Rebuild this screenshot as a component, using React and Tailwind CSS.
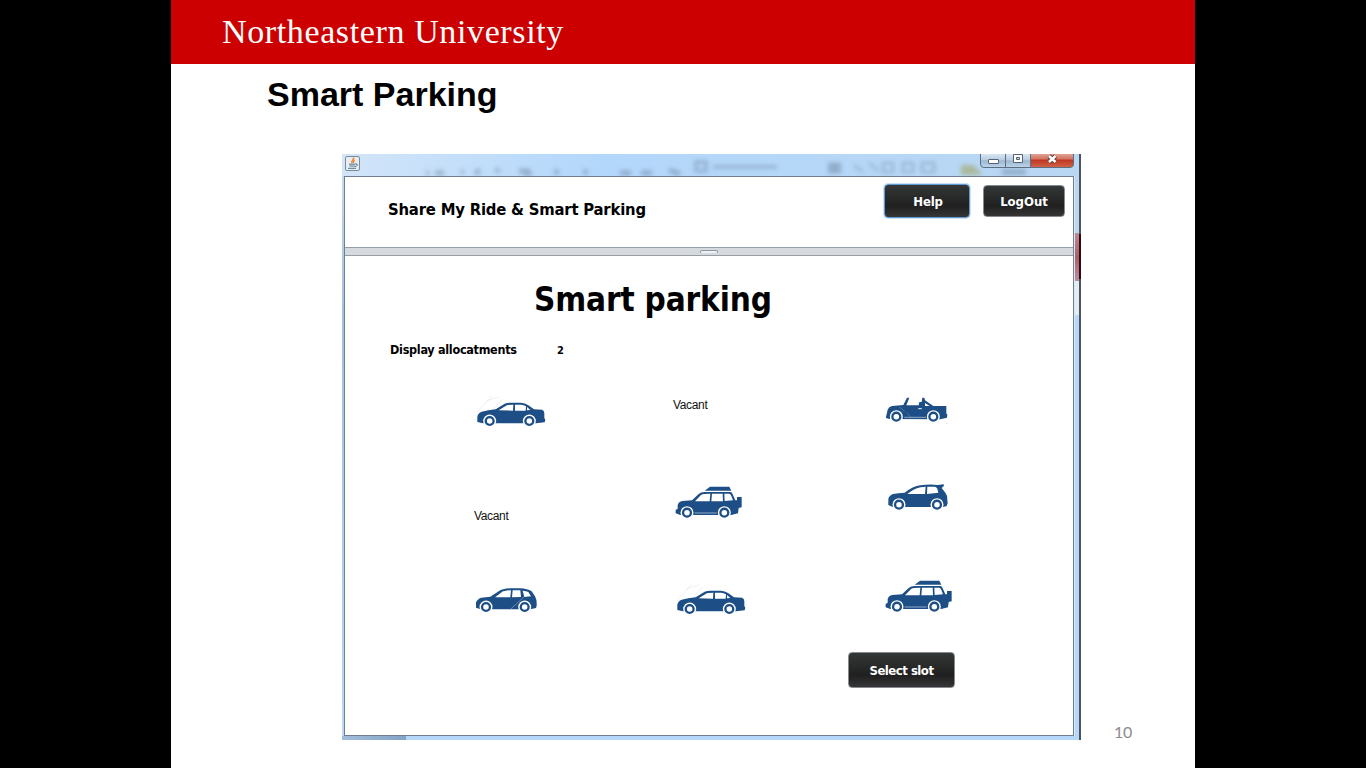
import React from "react";

const BLUE = "#1d4f86";
const UI = "font-['DejaVu_Sans_Condensed','DejaVu_Sans',sans-serif] [font-stretch:condensed] font-bold";

function Wheel({ cx, cy }) {
  return (
    <g>
      <circle cx={cx} cy={cy} r="19.5" fill="#fff" />
      <circle cx={cx} cy={cy} r="11.8" fill="#fff" stroke={BLUE} strokeWidth="7" />
    </g>
  );
}

function Car({ children, wheels, className = "" }) {
  return (
    <svg viewBox="0 0 300 165" width="100" height="55" className={`block shrink-0 ${className}`}>
      {children}
      {wheels.map(([x, y]) => (
        <Wheel key={x} cx={x} cy={y} />
      ))}
    </svg>
  );
}

function Sedan({ className }) {
  return (
    <Car className={className} wheels={[[89, 108], [208, 108]]}>
      <path d="M52 82 L96 32 M66 112 L128 42 M78 48 L118 36" stroke="#eef1f5" strokeWidth="3" fill="none" />
      <path d="M52 111 L52 95 Q54 84 65 80 Q84 75 107 73 L134 56 Q141 53 151 53 L183 53 Q195 54 204 60 L222 73 L246 74 Q253 76 253 85 L253 99 L256 104 L254 112 L228 115 L69 115 Z" fill={BLUE} />
      <path d="M116 76 L138 62 Q143 59 160 59 L159 77 Z M165 59 L183 59 Q191 60 198 64 L197 77 L165 77 Z M201 66 L211 75 L201 76 Z" fill="#fff" />
    </Car>
  );
}

function Jeep() {
  return (
    <Car wheels={[[79, 95], [190, 95]]}>
      <path d="M48 96 L53 74 Q56 65 66 63 L100 60 L111 38 L118 38 L109 61 L146 61 L148 51 L155 51 L157 38 L163 38 L165 46 L190 63 L229 63 L229 86 L232 88 L231 98 L211 103 L59 102 L48 99 Z" fill={BLUE} />
      <path d="M165 54 L179 63 L165 63 Z" fill="#fff" />
      <path d="M145 71 H155" stroke="#fff" strokeWidth="3" />
      <path d="M103 97 H168" stroke="#cfdae7" strokeWidth="2" />
      <path d="M88 66 L104 79 M110 84 L127 101" stroke="#7e9cbc" strokeWidth="1.5" />
      <path d="M226 115 h7" stroke="#d5dae0" strokeWidth="2" />
    </Car>
  );
}

function Suv({ className }) {
  return (
    <Car className={className} wheels={[[81, 113], [193, 113]]}>
      <path d="M47 115 L47 105 L53 101 L53 90 Q56 80 67 78 L96 76 L116 57 Q122 51 134 51 L211 51 Q216 51 218 58 L226 76 L231 76 L231 66 L245 66 L245 97 L236 99 L234 115 L214 120 L61 120 Z" fill={BLUE} />
      <path d="M134 47 L150 35 L208 35 L214 47 Z" fill={BLUE} />
      <path d="M105 79 L123 60 Q126 56 151 56 L149 79 Z M156 56 L188 56 L189 79 L154 79 Z M193 56 L208 56 Q212 57 214 63 L219 76 L194 78 Z" fill="#fff" />
      <path d="M104 114 H170" stroke="#cfdae7" strokeWidth="2" />
    </Car>
  );
}

function Hatchback() {
  return (
    <Car wheels={[[87, 89], [201, 89]]}>
      <path d="M55 90 L55 73 Q56 62 69 57 Q85 54 104 53 Q129 34 151 31 Q179 27 203 30 L221 28 L222 32 L215 39 L226 53 Q233 61 232 75 L233 84 L230 93 L220 96 L68 96 Z" fill={BLUE} />
      <path d="M112 57 Q135 39 152 37 L167 35 L165 57 Z M172 35 L195 35 Q200 36 202 41 L205 53 L171 57 Z" fill="#fff" />
    </Car>
  );
}

function Wagon() {
  return (
    <Car wheels={[[78, 96], [194, 96]]}>
      <path d="M48 98 L48 83 Q51 72 64 68 L91 65 L116 49 Q126 41 151 40 L181 40 Q202 41 215 49 L225 64 Q231 74 230 92 L228 99 L211 103 L62 103 Z" fill={BLUE} />
      <path d="M105 67 L123 53 Q131 46 153 46 L151 67 Z M158 46 L181 46 L183 66 L156 67 Z M188 47 Q199 48 205 51 L213 64 L193 66 Z" fill="#fff" />
      <path d="M150 104 L193 65" stroke="#8fa9c5" strokeWidth="2" />
    </Car>
  );
}

function Vacant({ className }) {
  return (
    <span className={`block shrink-0 h-4 leading-4 whitespace-nowrap font-['Liberation_Sans',sans-serif] text-[12px] tracking-[-0.35px] text-[#111] ${className}`}>
      Vacant
    </span>
  );
}

function DarkButton({ children, className }) {
  return (
    <button className={`${UI} flex shrink-0 items-center justify-center rounded-[4px] border bg-linear-to-b from-[#353838] via-[#202020] via-65% to-[#363636] text-[13px] leading-none text-white whitespace-nowrap ${className}`}>
      {children}
    </button>
  );
}

function JavaIcon() {
  return (
    <svg width="15" height="15" viewBox="0 0 15 15" className="block">
      <rect x="0.5" y="0.5" width="14" height="14" rx="1.5" fill="#e9edf1" stroke="#7c8996" />
      <path d="M8.8 1.5 C9 4 5.6 4.2 7.2 7.2 M9.6 4 C8 5 8.2 5.6 8.6 7" stroke="#ee7d22" strokeWidth="1.3" fill="none" />
      <path d="M4 8.2 H10 M4.5 10 H9.7 M3 12.3 H11 M10 8 Q13 7.5 12.3 9.2 Q11.5 10.7 9.6 10.8" stroke="#4d7790" strokeWidth="1" fill="none" />
    </svg>
  );
}

function TitleBar() {
  return (
    <div className="relative flex h-[22px] shrink-0 items-start justify-between overflow-hidden bg-linear-to-r from-[#d2e5f9] via-[#b3d7fb] via-35% to-[#b9d7f3] pl-[3px] pr-[5px]">
      <svg width="739" height="22" className="absolute inset-0 blur-[2px]">
        <g stroke="#7892ad" fill="none" opacity="0.6">
          <path d="M84 19h3 M93 19h9 M119 18h3 M133 20l5-4 M154 18l3-3 M177 17h11 M182 20h8 M212 18h5 M241 18h5 M278 19h11 M299 19h11 M327 16l11 4" strokeWidth="5" />
          <path d="M354 8h10v9h-10z M371 13h64" strokeWidth="3" />
          <path d="M486 14h13" strokeWidth="11" />
          <path d="M512 11l9 7 M527 9l9 8 M541 9h10v9h-10z M561 9h10v9h-10z M580 9h12v9h-12z" strokeWidth="2" />
          <path d="M660 18h24" strokeWidth="6" />
        </g>
        <path d="M619 11h12l10 10h-22z" fill="#a5ad78" opacity=".7" />
      </svg>
      <div className="relative pt-[2px]"><JavaIcon /></div>
      <svg width="94" height="15" viewBox="0 0 94 15" className="relative block">
        <defs>
          <linearGradient id="glass" x1="0" y1="0" x2="0" y2="1">
            <stop offset="0" stopColor="#d9e7f4" /><stop offset=".45" stopColor="#b5cce1" /><stop offset=".5" stopColor="#9bb6cf" /><stop offset="1" stopColor="#bdd6ec" />
          </linearGradient>
          <linearGradient id="close" x1="0" y1="0" x2="0" y2="1">
            <stop offset="0" stopColor="#e0a296" /><stop offset=".38" stopColor="#d3725f" /><stop offset=".44" stopColor="#bd3520" /><stop offset="1" stopColor="#d4654a" />
          </linearGradient>
        </defs>
        <path d="M.5 0V10Q.5 13.5 4 13.5H50.5V0Z" fill="url(#glass)" />
        <path d="M50.5 0V13.5H90Q93.5 13.5 93.5 10V0Z" fill="url(#close)" />
        <path d="M.5 0V10Q.5 13.5 4 13.5H90Q93.5 13.5 93.5 10V0M25.5 0V13M50.5 0V13" fill="none" stroke="#5c6f82" />
        <rect x="8.5" y="5.5" width="10" height="4" rx=".5" fill="#fff" stroke="#576373" />
        <path d="M33.5 .5H42.5V8.5H33.5ZM36.5 3.5V5.5H39.5V3.5Z" fill="#fff" fillRule="evenodd" stroke="#576373" />
        <path d="M69 2L75.5 8M75.5 2L69 8" stroke="#6a3c3b" strokeWidth="4.5" />
        <path d="M69 2L75.5 8M75.5 2L69 8" stroke="#fff" strokeWidth="2.5" />
      </svg>
    </div>
  );
}

function AppWindow() {
  return (
    <div className="flex h-[586px] w-[739px] shrink-0 bg-[#4a545e]">
      <div className="flex w-[737px] shrink-0 flex-col bg-[#b6d7f9]">
        <TitleBar />
        <div className="flex h-[560px] shrink-0">
          <div className="w-[2px] shrink-0 bg-linear-to-b from-[#c4daef] via-[#9fc0df] via-25% to-[#b9d8f7]" />
          <main className="flex h-[560px] w-[730px] shrink-0 flex-col border border-[#6f7f90] bg-white">
            <header className="flex h-[70px] shrink-0 items-start pl-[43px] pt-[7px]">
              <h2 className={`${UI} mt-[16px] h-5 w-[496px] text-[16.5px] leading-5 tracking-[-0.2px] whitespace-nowrap text-black`}>
                Share My Ride &amp; Smart Parking
              </h2>
              <DarkButton className="h-[34px] w-[86px] border-[#5f9cd6] pl-0.5 tracking-[-0.2px] ring-1 ring-[#a9cdf0]/60">Help</DarkButton>
              <DarkButton className="ml-[13px] mt-px h-8 w-[82px] border-[#858b90]">LogOut</DarkButton>
            </header>
            <div className="flex h-[9px] shrink-0 justify-center border-y border-[#969ea6] bg-[#d6dadf]">
              <div className="mt-[2px] h-[3px] w-[18px] rounded-t-[2px] border-x border-t border-[#8d97a3] bg-[#edf0f4]" />
            </div>
            <section className="flex flex-1 flex-col">
              <h1 className={`${UI} ml-[189px] mt-[24px] h-10 text-[33px] leading-10 tracking-[-0.15px] whitespace-nowrap text-black`}>Smart parking</h1>
              <div className={`${UI} ml-[45px] mt-[22px] flex h-4 text-[12.5px] leading-4 whitespace-nowrap text-black`}>
                <span className="w-[167px] tracking-[-0.28px]">Display allocatments</span>
                <span className="text-[11px] leading-[17px]">2</span>
              </div>
              <div className="ml-[115px] mt-[27px] flex h-[245px] shrink-0">
                <div className="flex w-[200px] flex-col">
                  <Sedan />
                  <Vacant className="ml-[14px] mt-[68px]" />
                  <div className="mt-[51px]"><Wagon /></div>
                </div>
                <div className="flex w-[210px] flex-col">
                  <Vacant className="ml-[13px] mt-[12px]" />
                  <Suv className="mt-[62px]" />
                  <Sedan className="mt-[43px]" />
                </div>
                <div className="flex w-[100px] flex-col">
                  <Jeep />
                  <div className="mt-[35px]"><Hatchback /></div>
                  <Suv className="mt-[39px]" />
                </div>
              </div>
              <DarkButton className="ml-[503px] mt-[22px] h-[36px] w-[107px] border-[#858b90] tracking-[-0.5px]">Select slot</DarkButton>
            </section>
          </main>
          <div className="flex w-[5px] shrink-0 flex-col border-l border-[#d7e8f7]">
            <div className="h-[57px] bg-[#bcd7f1]" />
            <div className="h-[48px] bg-linear-to-b from-[#bd8a96] via-[#aa5e68] to-[#b98e9c]" />
            <div className="h-[34px] bg-[#e4edf5]" />
            <div className="flex-1 bg-[#b6d7f9]" />
          </div>
        </div>
        <div className="flex h-1">
          <div className="w-[64px] bg-linear-to-r from-[#a3bdd9] to-[#83a4c5]" />
          <div className="flex-1 bg-[#b6d7f9]" />
        </div>
      </div>
      <div className="flex w-[2px] flex-col pt-[80px]">
        <div className="h-[45px] bg-[#30080f]" />
      </div>
    </div>
  );
}

export default function App() {
  return (
    <div className="flex h-[768px] w-[1366px] justify-center overflow-hidden bg-black">
      <div className="flex w-[1024px] flex-col bg-white">
        <div className="flex h-16 shrink-0 items-center bg-[#cc0000] pl-[51px]">
          <span className="font-['Liberation_Serif',serif] text-[34px] leading-[40px] tracking-[0.62px] whitespace-nowrap text-white">Northeastern University</span>
        </div>
        <h1 className="ml-[96px] mt-[10px] h-10 shrink-0 font-['Liberation_Sans',sans-serif] text-[34px] leading-10 font-bold whitespace-nowrap text-black">Smart Parking</h1>
        <div className="mt-[40px] flex items-end pl-[171px]">
          <AppWindow />
          <span className="ml-[33px] font-[Lato,sans-serif] text-[16px] leading-4 tracking-[-0.3px] text-[#8b8b8b]">10</span>
        </div>
      </div>
    </div>
  );
}
